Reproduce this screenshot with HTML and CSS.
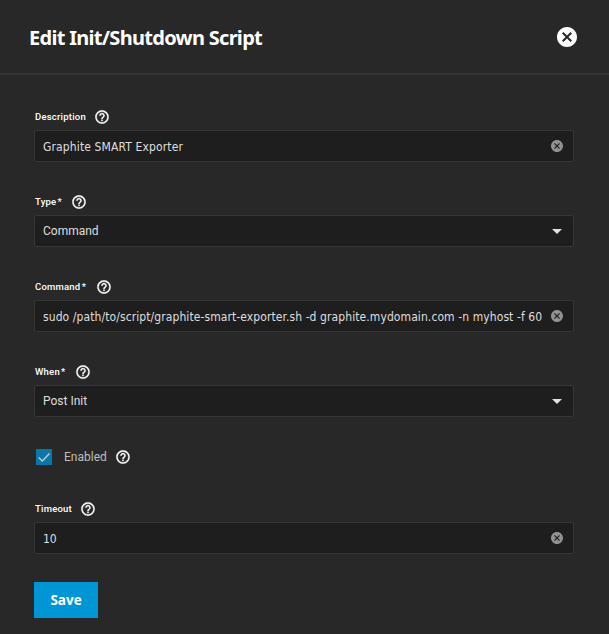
FILE: index.html
```html
<!DOCTYPE html>
<html lang="en">
<head>
<meta charset="utf-8">
<title>Edit Init/Shutdown Script</title>
<link rel="stylesheet" href="styles.css">
</head>
<body>
<svg width="0" height="0" class="defs">
  <symbol id="help" viewBox="0 0 24 24"><path d="M11 18h2v-2h-2v2zm1-16C6.48 2 2 6.48 2 12s4.480 10 10 10 10-4.480 10-10S17.520 2 12 2zm0 18c-4.410 0-8-3.590-8-8s3.590-8 8-8 8 3.590 8 8-3.590 8-8 8zm0-14c-2.210 0-4 1.790-4 4h2c0-1.100.9-2 2-2s2 .9 2 2c0 2-3 1.750-3 5h2c0-2.250 3-2.500 3-5 0-2.210-1.790-4-4-4z"/></symbol>
  <symbol id="cancel" viewBox="2 2 20 20"><path d="M12 2C6.470 2 2 6.470 2 12s4.470 10 10 10 10-4.470 10-10S17.530 2 12 2zm5 13.590L15.590 17 12 13.410 8.410 17 7 15.590 10.590 12 7 8.410 8.410 7 12 10.590 15.590 7 17 8.410 13.410 12 17 15.590z"/></symbol>
</svg>
<header class="header">
  <h1 class="title">Edit Init/Shutdown Script</h1>
  <svg class="close"><use href="#cancel"/></svg>
</header>
<main class="form">
  <div class="field">
    <div class="label"><span class="l-desc">Description</span><svg class="help"><use href="#help"/></svg></div>
    <div class="box"><span class="value v-desc">Graphite SMART Exporter</span><svg class="clear"><use href="#cancel"/></svg></div>
  </div>
  <div class="field">
    <div class="label"><span class="l-type">Type&#8202;*</span><svg class="help"><use href="#help"/></svg></div>
    <div class="box"><span class="choice">Command</span><i class="arrow"></i></div>
  </div>
  <div class="field">
    <div class="label"><span class="l-cmd">Command&#8202;*</span><svg class="help"><use href="#help"/></svg></div>
    <div class="box"><span class="value v-cmd">sudo /path/to/script/graphite-smart-exporter.sh -d graphite.mydomain.com -n myhost -f 60</span><svg class="clear"><use href="#cancel"/></svg></div>
  </div>
  <div class="field">
    <div class="label"><span class="l-when">When&#8202;*</span><svg class="help"><use href="#help"/></svg></div>
    <div class="box"><span class="choice">Post Init</span><i class="arrow"></i></div>
  </div>
  <div class="check-row">
    <svg class="checkbox" viewBox="0 0 16 16"><rect width="16" height="16" rx="1"/><path d="M2.700 8.500l3.600 3.500 7.200-7.500"/></svg>
    <span class="check-label">Enabled</span><svg class="help"><use href="#help"/></svg>
  </div>
  <div class="field">
    <div class="label"><span class="l-time">Timeout</span><svg class="help"><use href="#help"/></svg></div>
    <div class="box"><span class="value">10</span><svg class="clear"><use href="#cancel"/></svg></div>
  </div>
  <button class="save">Save</button>
</main>
</body>
</html>
```
FILE: styles.css
```css
* { box-sizing: border-box; }
body { margin: 0; height: 634px; overflow: hidden; background: #282828; color: #fff; font-family: Roboto, sans-serif; }
svg { display: block; flex: none; }
.defs { position: absolute; }
.header { height: 75px; border-bottom: 2px solid #343434; padding: 0 32px 0 29px; display: flex; align-items: center; justify-content: space-between; }
.title { margin: 2px 0 0; font: 700 20px/30px "Noto Sans", sans-serif; letter-spacing: -0.71px; white-space: nowrap; }
.close { width: 20px; height: 20px; fill: #fff; }
.form { padding: 34px 35px 0 34px; }
.field { height: 85px; }
.label { height: 16px; margin-bottom: 5px; padding-left: 1px; display: flex; align-items: center; gap: 8px; font-size: 9.5px; line-height: 16px; font-weight: 500; letter-spacing: 0.22px; }
.label span { white-space: nowrap; }
.l-desc { width: 51px; }
.l-type { width: 28px; }
.l-cmd { width: 53px; }
.l-when { width: 32px; }
.l-time { width: 37px; }
.help { width: 16px; height: 16px; fill: #fff; stroke: #fff; stroke-width: 0.4; }
.box { height: 32px; background: #1e1e1e; border: 1px solid #363636; border-radius: 2px; padding: 0 10px 0 8px; display: flex; align-items: center; justify-content: space-between; }
.value { font: 12px/18px "DejaVu Sans Condensed", "DejaVu Sans", sans-serif; font-stretch: condensed; color: #dedede; white-space: nowrap; position: relative; top: 1px; }
.v-desc { letter-spacing: 0.13px; }
.v-cmd { letter-spacing: 0.09px; }
.choice { font-size: 12px; line-height: 18px; color: #dedede; }
.clear { width: 12px; height: 12px; fill: #929292; }
.arrow { width: 0; height: 0; border: 5px solid transparent; border-top-color: #e0e0e0; border-bottom: 0; margin-right: 1px; }
.check-row { height: 52px; padding-left: 2px; display: flex; align-items: flex-start; }
.checkbox { width: 16px; height: 16px; }
.checkbox rect { fill: #0a77ab; }
.checkbox path { fill: none; stroke: #c7c7c7; stroke-width: 1.500; }
.check-label { width: 51px; margin-left: 12px; font-size: 12px; line-height: 16px; color: #bdbdbd; }
.save { display: block; width: 64px; height: 36px; margin-top: -4px; padding: 0; border: 0; background: #0095d5; color: #fff; font: 700 13.5px/36px "Open Sans", sans-serif; }
```
